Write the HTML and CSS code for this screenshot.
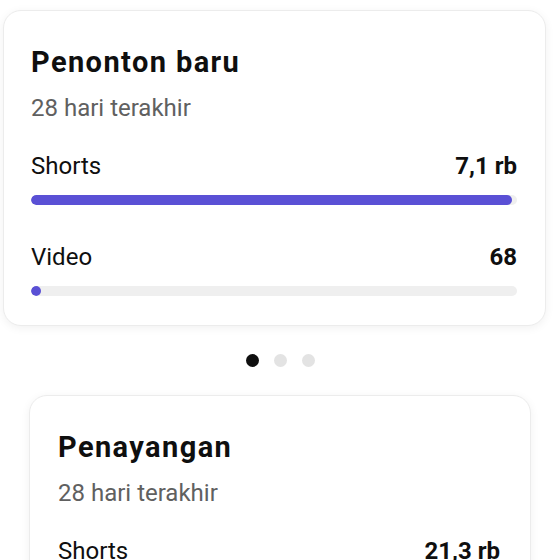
FILE: index.html
```html
<!DOCTYPE html>
<html lang="id">
<head>
    <meta charset="UTF-8">
    <meta name="viewport" content="width=device-width, initial-scale=1.0">
    <title>Penonton baru</title>
    <link rel="stylesheet" href="styles.css">
</head>
<body>
    <div class="page">
        <div class="card card-active">
            <h2 class="card-title">Penonton baru</h2>
            <div class="card-sub">28 hari terakhir</div>

            <div class="metric">
                <div class="metric-row">
                    <span>Shorts</span>
                    <span class="metric-value">7,1 rb</span>
                </div>
                <div class="track"><div class="fill" style="width: 99%"></div></div>
            </div>

            <div class="metric">
                <div class="metric-row">
                    <span>Video</span>
                    <span class="metric-value">68</span>
                </div>
                <div class="track"><div class="fill" style="width: 10px"></div></div>
            </div>
        </div>

        <div class="dots">
            <span class="dot active"></span>
            <span class="dot"></span>
            <span class="dot"></span>
        </div>

        <div class="card card-next">
            <h2 class="card-title">Penayangan</h2>
            <div class="card-sub">28 hari terakhir</div>

            <div class="metric">
                <div class="metric-row">
                    <span>Shorts</span>
                    <span class="metric-value">21,3 rb</span>
                </div>
                <div class="track"><div class="fill" style="width: 97%"></div></div>
            </div>
        </div>
    </div>
</body>
</html>
```

FILE: styles.css
```css
body {
    font-family: Roboto, "Noto Sans", Arial, sans-serif;
    margin: 0;
    padding: 0;
    background-color: #fff;
    color: #0f0f0f;
}
.page {
    display: flex;
    flex-direction: column;
    padding-top: 10px;
}
.card {
    background-color: #fff;
    border: 1px solid #ececec;
    border-radius: 18px;
    box-shadow: 0 2px 10px rgba(0, 0, 0, 0.06);
    padding: 34px 28px 29px 27px;
    box-sizing: border-box;
}
.card-active {
    margin-left: 3px;
    width: 543px;
}
.card-next {
    margin-left: 29px;
    width: 502px;
    padding-left: 28px;
    padding-right: 30px;
}
.card-title {
    margin: 0;
    font-size: 29px;
    line-height: 34px;
    font-weight: 700;
    letter-spacing: 1.4px;
}
.card-sub {
    margin-top: 14px;
    font-size: 24px;
    line-height: 30px;
    color: #606060;
}
.metric {
    margin-top: 28px;
}
.metric + .metric {
    margin-top: 37px;
}
.metric-row {
    display: flex;
    justify-content: space-between;
    font-size: 24px;
    line-height: 30px;
}
.metric-value {
    font-weight: 700;
}
.track {
    margin-top: 14px;
    height: 10px;
    border-radius: 5px;
    background-color: #efefef;
    overflow: hidden;
}
.fill {
    height: 100%;
    border-radius: 5px;
    background-color: #5a50d5;
}
.dots {
    display: flex;
    justify-content: center;
    gap: 15px;
    margin: 28px 0;
}
.dot {
    width: 13px;
    height: 13px;
    border-radius: 50%;
    background-color: #e3e3e3;
}
.dot.active {
    background-color: #0f0f0f;
}
```
